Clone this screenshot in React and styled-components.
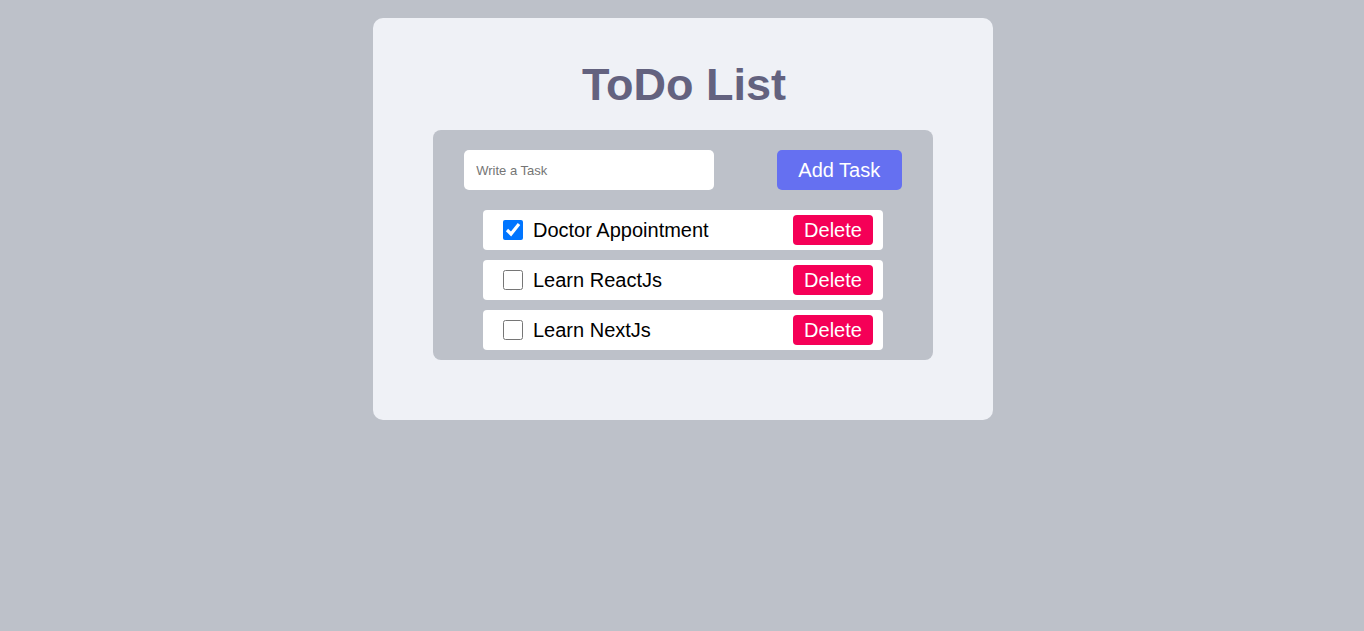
import React, { useState } from "react";
import styled, { createGlobalStyle } from "styled-components";

const GlobalStyle = createGlobalStyle`
  body {
    margin: 0;
    padding: 18px 0 18px 2px;
    background: #bdc1c9;
    font-family: "Liberation Sans", Arial, sans-serif;
  }
`;

const Card = styled.div`
  width: 620px;
  margin: 0 auto;
  box-sizing: border-box;
  padding: 20px 60px 60px;
  background: #eff1f6;
  border-radius: 10px;
`;

const Title = styled.h1`
  margin: 20px 0 19px;
  padding-left: 2px;
  text-align: center;
  font-size: 45px;
  line-height: 53px;
  font-weight: bold;
  color: #63627f;
`;

const Panel = styled.div`
  background: #bdc1c9;
  border-radius: 8px;
  padding: 20px 0 10px;
  display: flex;
  flex-direction: column;
  align-items: center;
  gap: 20px;
`;

const InputRow = styled.div`
  width: 100%;
  display: flex;
  justify-content: space-around;
`;

const TaskInput = styled.input`
  width: 250px;
  height: 40px;
  box-sizing: border-box;
  border: none;
  border-radius: 5px;
  padding: 0 12px;
  font-family: inherit;
  font-size: 13px;
  outline: none;
  &::placeholder {
    color: #757575;
  }
`;

const AddButton = styled.button`
  width: 125px;
  height: 40px;
  border: none;
  border-radius: 5px;
  background: #6570f1;
  color: #fff;
  font-family: inherit;
  font-size: 20px;
  cursor: pointer;
`;

const List = styled.ul`
  list-style: none;
  margin: 0;
  padding: 0;
  display: flex;
  flex-direction: column;
  gap: 10px;
`;

const Item = styled.li`
  width: 400px;
  height: 40px;
  box-sizing: border-box;
  background: #fff;
  border-radius: 4px;
  display: flex;
  align-items: center;
  padding: 0 10px 0 20px;
`;

const Check = styled.input`
  width: 20px;
  height: 20px;
  margin: 0 10px 0 0;
  accent-color: #0075ff;
`;

const Label = styled.span`
  flex: 1;
  font-size: 20px;
  color: #000;
`;

const DeleteButton = styled.button`
  width: 80px;
  height: 30px;
  border: none;
  border-radius: 4px;
  background: #f50057;
  color: #fff;
  font-family: inherit;
  font-size: 20px;
  padding: 0;
  cursor: pointer;
`;

export default function App() {
  const [tasks, setTasks] = useState([
    { id: 1, text: "Doctor Appointment", done: true },
    { id: 2, text: "Learn ReactJs", done: false },
    { id: 3, text: "Learn NextJs", done: false },
  ]);
  const [value, setValue] = useState("");

  const add = () => {
    if (!value.trim()) return;
    setTasks([...tasks, { id: Date.now(), text: value, done: false }]);
    setValue("");
  };

  return (
    <>
      <GlobalStyle />
      <Card>
        <Title>ToDo List</Title>
        <Panel>
          <InputRow>
            <TaskInput
              placeholder="Write a Task"
              value={value}
              onChange={(e) => setValue(e.target.value)}
            />
            <AddButton onClick={add}>Add Task</AddButton>
          </InputRow>
          <List>
            {tasks.map((t) => (
              <Item key={t.id}>
                <Check
                  type="checkbox"
                  checked={t.done}
                  onChange={() =>
                    setTasks(tasks.map((x) => (x.id === t.id ? { ...x, done: !x.done } : x)))
                  }
                />
                <Label>{t.text}</Label>
                <DeleteButton onClick={() => setTasks(tasks.filter((x) => x.id !== t.id))}>
                  Delete
                </DeleteButton>
              </Item>
            ))}
          </List>
        </Panel>
      </Card>
    </>
  );
}
